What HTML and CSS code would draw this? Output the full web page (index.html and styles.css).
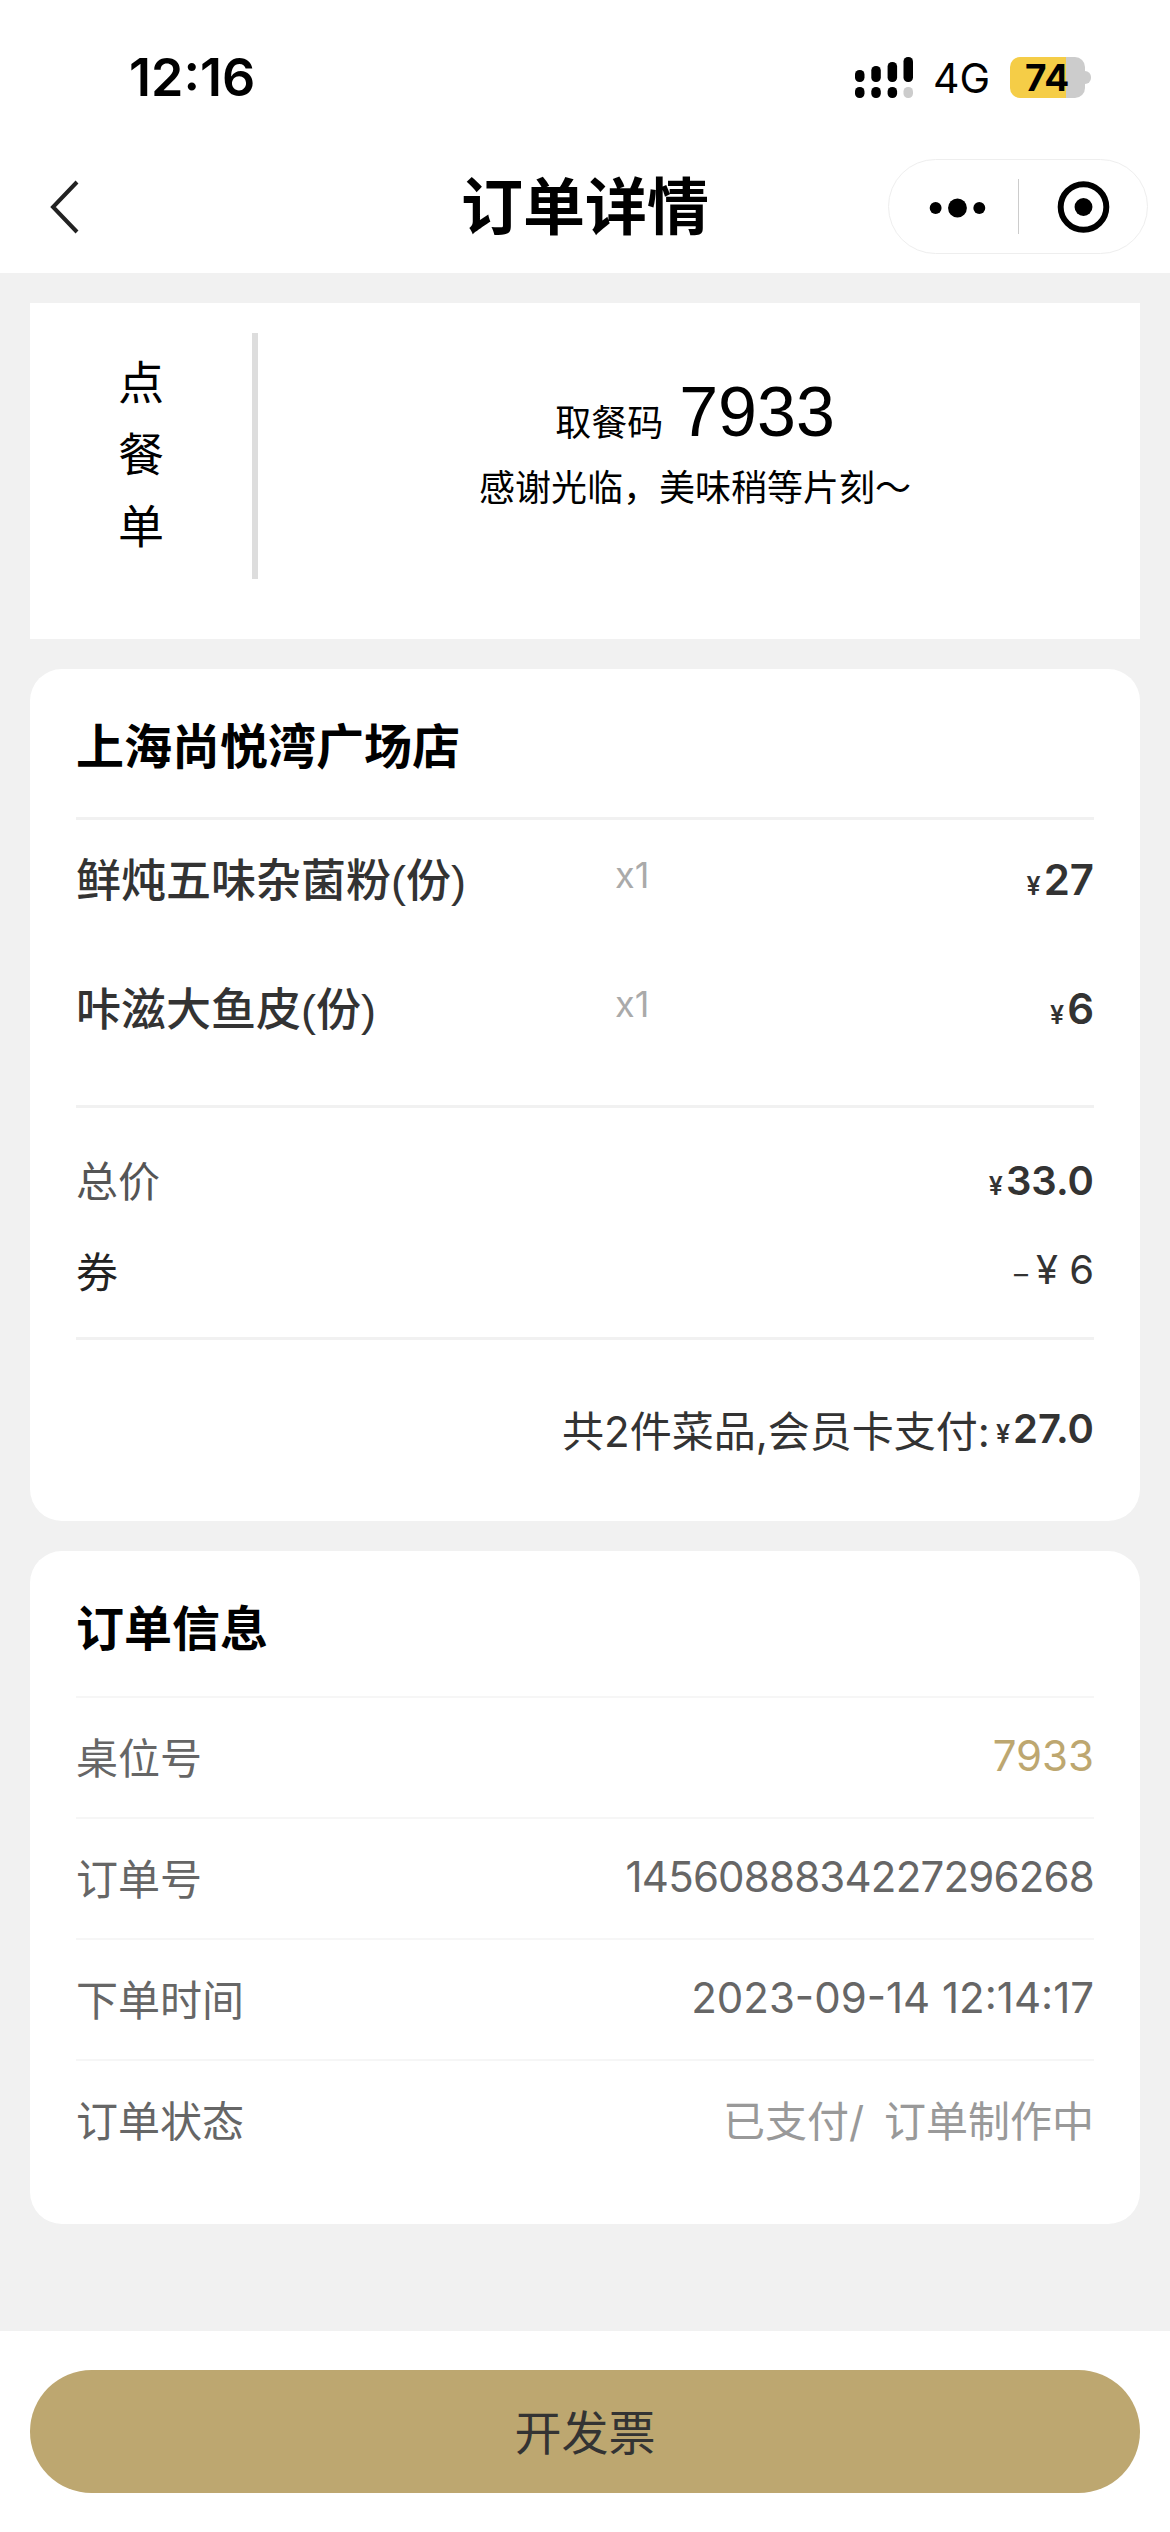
FILE: index.html
```html
<!DOCTYPE html>
<html lang="zh-CN">
<head>
    <meta charset="UTF-8">
    <meta name="viewport" content="width=device-width, initial-scale=1.0">
    <title>订单详情</title>
    <link rel="stylesheet" href="styles.css">
</head>
<body>

    <!-- Status bar -->
    <div class="status-bar">
        <span class="clock">12:16</span>
        <div class="status-icons">
            <svg class="signal" width="58" height="41" viewBox="0 0 58 41">
                <rect x="0" y="13" width="9.5" height="12" rx="4.5" fill="#000"/>
                <rect x="16.3" y="9" width="9.5" height="16" rx="4.5" fill="#000"/>
                <rect x="32.6" y="5" width="9.5" height="20" rx="4.5" fill="#000"/>
                <rect x="48.5" y="0" width="9.5" height="25" rx="4.5" fill="#000"/>
                <rect x="0" y="30" width="9.5" height="11" rx="4.5" fill="#000"/>
                <rect x="16.3" y="30" width="9.5" height="11" rx="4.5" fill="#000"/>
                <rect x="32.6" y="30" width="9.5" height="11" rx="4.5" fill="#000"/>
                <rect x="48.5" y="30" width="9.5" height="11" rx="4.5" fill="#ccc"/>
            </svg>
            <span class="network">4G</span>
            <div class="battery">
                <span class="battery-level">74</span>
            </div>
            <span class="battery-nub"></span>
        </div>
    </div>

    <!-- Navigation -->
    <div class="nav-bar">
        <svg class="back" width="30" height="54" viewBox="0 0 30 54">
            <path d="M28 2 L4 27 L28 52" fill="none" stroke="#222" stroke-width="4"/>
        </svg>
        <h1 class="nav-title">订单详情</h1>
        <div class="capsule">
            <svg class="capsule-more" width="130" height="55" viewBox="0 0 130 55">
                <circle cx="47" cy="29" r="6" fill="#000"/>
                <circle cx="69" cy="29" r="9.5" fill="#000"/>
                <circle cx="91" cy="29" r="6" fill="#000"/>
            </svg>
            <span class="capsule-line"></span>
            <svg class="capsule-close" width="129" height="55" viewBox="0 0 129 55">
                <circle cx="65" cy="28" r="23" fill="none" stroke="#000" stroke-width="6"/>
                <circle cx="65" cy="28" r="9" fill="#000"/>
            </svg>
        </div>
    </div>

    <div class="content">

        <!-- Pickup code -->
        <div class="ticket">
            <div class="ticket-type">
                <span>点</span>
                <span>餐</span>
                <span>单</span>
            </div>
            <div class="ticket-info">
                <div class="pickup">
                    <span class="pickup-label">取餐码</span>
                    <span class="pickup-code">7933</span>
                </div>
                <p class="pickup-note">感谢光临&#xFF0C;美味稍等片刻&#xFF5E;</p>
            </div>
        </div>

        <!-- Dishes -->
        <div class="card">
            <h2 class="shop-name">上海尚悦湾广场店</h2>
            <div class="dishes">
                <div class="dish">
                    <span class="dish-name">鲜炖五味杂菌粉(份)</span>
                    <span class="dish-qty">x1</span>
                    <span class="dish-price"><small>¥</small>27</span>
                </div>
                <div class="dish">
                    <span class="dish-name">咔滋大鱼皮(份)</span>
                    <span class="dish-qty">x1</span>
                    <span class="dish-price"><small>¥</small>6</span>
                </div>
            </div>
            <div class="summary">
                <div class="summary-row">
                    <span class="summary-label">总价</span>
                    <span class="summary-price"><small>¥</small>33.0</span>
                </div>
                <div class="summary-row">
                    <span class="coupon-label">券</span>
                    <span class="coupon-price"><small class="coupon-dash">&#x2013;</small>¥ 6</span>
                </div>
            </div>
            <div class="total">
                <span>共2件菜品,会员卡支付:</span>
                <span class="total-price"><small>¥</small>27.0</span>
            </div>
        </div>

        <!-- Order info -->
        <div class="card card-info">
            <h2 class="info-title">订单信息</h2>
            <div class="info-row">
                <span>桌位号</span>
                <span class="gold">7933</span>
            </div>
            <div class="info-row">
                <span>订单号</span>
                <span class="order-no">1456088834227296268</span>
            </div>
            <div class="info-row">
                <span>下单时间</span>
                <span>2023-09-14 12:14:17</span>
            </div>
            <div class="info-row">
                <span>订单状态</span>
                <span class="muted">已支付/ 订单制作中</span>
            </div>
        </div>

    </div>

    <!-- Invoice button -->
    <div class="footer">
        <button class="invoice-btn">开发票</button>
    </div>

</body>
</html>
```

FILE: styles.css
```css
* {
    box-sizing: border-box;
}
body {
    margin: 0;
    width: 1170px;
    height: 2532px;
    display: flex;
    flex-direction: column;
    font-family: Inter, "Noto Sans CJK SC", sans-serif;
    background-color: #f1f1f1;
    color: #000;
}
h1, h2, p {
    margin: 0;
}

/* status bar */
.status-bar {
    height: 150px;
    padding: 57px 79px 0 129px;
    display: flex;
    justify-content: space-between;
    align-items: flex-start;
    background: #fff;
}
.clock {
    font-size: 52px;
    font-weight: 600;
    line-height: 41px;
}
.status-icons {
    display: flex;
    align-items: flex-start;
}
.signal {
    margin-right: 20px;
}
.network {
    font-size: 41px;
    line-height: 43px;
    margin-right: 20px;
}
.battery {
    width: 75px;
    height: 41px;
    border-radius: 10px;
    background: linear-gradient(to right, #f5cd47 75%, #ccc 75%);
    padding-left: 15px;
}
.battery-level {
    font-size: 37px;
    font-weight: 700;
    line-height: 41px;
    display: block;
}
.battery-nub {
    width: 6px;
    height: 13px;
    margin-top: 14px;
    border-radius: 0 6px 6px 0;
    background: #ccc;
}

/* nav */
.nav-bar {
    height: 123px;
    padding: 9px 22px 0 49px;
    display: flex;
    justify-content: space-between;
    background: #fff;
    position: relative;
}
.back {
    margin-top: 21px;
}
.nav-title {
    font-size: 62px;
    font-weight: 700;
    line-height: 116px;
    position: absolute;
    left: 0;
    right: 0;
    top: 0;
    text-align: center;
}
.capsule {
    width: 260px;
    height: 95px;
    border: 1px solid #eee;
    border-radius: 48px;
    display: flex;
    align-items: center;
    background: #fff;
    position: relative;
}
.capsule-line {
    width: 1px;
    height: 55px;
    background: #ccc;
}

/* main */
.content {
    flex: 1;
    padding: 30px 30px 0;
    display: flex;
    flex-direction: column;
    gap: 30px;
}
.ticket {
    height: 336px;
    padding: 30px 0 60px;
    display: flex;
    background: #fff;
}
.ticket-type {
    width: 228px;
    border-right: 6px solid #ddd;
    padding-top: 13px;
    display: flex;
    flex-direction: column;
    align-items: center;
    font-size: 46px;
    line-height: 72px;
}
.ticket-type span {
    display: block;
    height: 72px;
}
.ticket-info {
    flex: 1;
    display: flex;
    flex-direction: column;
    align-items: center;
    padding-top: 37px;
    padding-right: 8px;
}
.pickup {
    display: flex;
    align-items: baseline;
    gap: 16px;
    height: 84px;
}
.pickup-label {
    font-size: 36px;
}
.pickup-code {
    font-family: "Liberation Sans", sans-serif;
    font-size: 70px;
    line-height: 84px;
}
.pickup-note {
    font-size: 36px;
    line-height: 56px;
    margin-top: 6px;
}
.card {
    height: 852px;
    padding: 0 46px;
    border-radius: 32px;
    background: #fff;
}
small {
    font-size: 25px;
    margin-right: 3px;
}
.shop-name {
    height: 148px;
    padding-top: 45px;
    font-size: 48px;
    font-weight: 700;
    line-height: 66px;
}
.dishes {
    border-top: 3px solid #f1f1f1;
    padding-bottom: 27px;
    color: #333;
}
.dish {
    height: 120px;
    margin-bottom: 9px;
    display: flex;
    align-items: center;
}
.dish-name {
    width: 539px;
    font-family: "Liberation Sans", "Noto Sans CJK SC", sans-serif;
    font-size: 45px;
    font-weight: 500;
    margin-bottom: 6px;
}
.dish-qty {
    flex: 1;
    font-size: 36px;
    color: #aaa;
    margin-top: -10px;
}
.dish-price {
    font-size: 42px;
    font-weight: 600;
    margin-bottom: 2px;
}
.summary {
    border-top: 3px solid #f1f1f1;
    border-bottom: 3px solid #f1f1f1;
    padding: 25px 0 22px;
}
.summary-row {
    height: 91px;
    display: flex;
    justify-content: space-between;
    align-items: center;
    font-size: 42px;
}
.summary-label {
    color: #555;
}
.summary-price {
    font-size: 40px;
    font-weight: 600;
    color: #333;
    margin-top: 3px;
}
.coupon-label {
    color: #222;
}
.coupon-price {
    font-size: 40px;
    color: #333;
}
.coupon-dash {
    font-size: 28px;
    margin-right: 8px;
}
.total {
    height: 176px;
    display: flex;
    justify-content: flex-end;
    align-items: center;
    gap: 6px;
    font-size: 42px;
    color: #333;
}
.total-price {
    font-size: 40px;
    font-weight: 600;
}
.card-info {
    height: 673px;
}
.info-title {
    height: 145px;
    padding-top: 45px;
    font-size: 48px;
    font-weight: 700;
    line-height: 66px;
}
.info-row {
    height: 121px;
    padding-bottom: 5px;
    border-top: 2px solid #f6f6f6;
    display: flex;
    justify-content: space-between;
    align-items: center;
    font-size: 42px;
    color: #666;
}
.gold {
    color: #bda770;
}
.order-no {
    letter-spacing: -0.8px;
}
.muted {
    color: #999;
    word-spacing: 8px;
}

/* footer */
.footer {
    height: 201px;
    padding: 39px 30px 0;
    background: #fff;
}
.invoice-btn {
    display: block;
    width: 100%;
    height: 123px;
    padding-bottom: 6px;
    border: 0;
    border-radius: 62px;
    background: #bda770;
    color: #333;
    font-family: inherit;
    font-size: 47px;
}
```
